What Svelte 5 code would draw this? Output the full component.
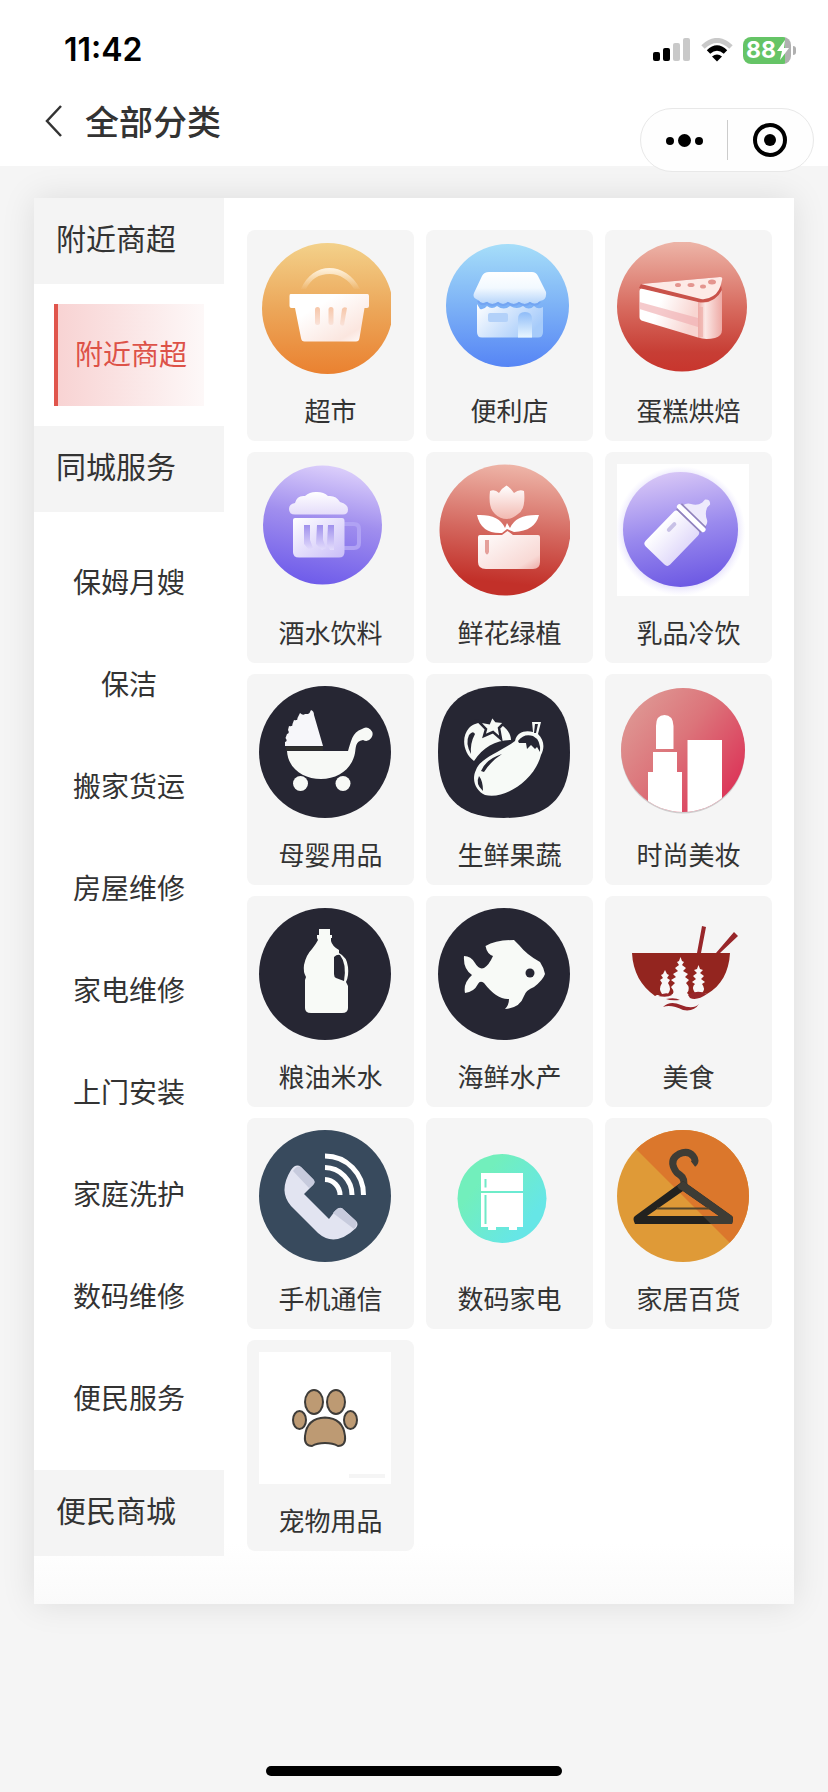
<script>
  const sections = [
    { title: '附近商超', items: ['附近商超'] },
    {
      title: '同城服务',
      items: ['保姆月嫂', '保洁', '搬家货运', '房屋维修', '家电维修', '上门安装', '家庭洗护', '数码维修', '便民服务']
    },
    { title: '便民商城', items: [] }
  ];
  let active = $state('附近商超');
</script>

{#snippet basket()}
  <defs>
    <linearGradient id="bk" x2="0" y2="1"><stop stop-color="#f3d18a" /><stop offset=".5" stop-color="#eca75a" /><stop offset="1" stop-color="#ea8130" /></linearGradient>
    <linearGradient id="bkh" x2="0" y2="1"><stop stop-color="#fff3e0" /><stop offset="1" stop-color="#fff3e0" stop-opacity=".05" /></linearGradient>
    <linearGradient id="bkb" x2="1" y2="1"><stop offset=".3" stop-color="#fff" /><stop offset=".8" stop-color="#fbe6df" /><stop offset="1" stop-color="#fff" /></linearGradient>
    <linearGradient id="bks" x2="0" y2="1"><stop stop-color="#f6c6a8" /><stop offset="1" stop-color="#fae3da" /></linearGradient>
  </defs>
  <circle cx="68.500" cy="66.500" r="65.500" fill="url(#bk)" />
  <path d="M42 47C48 33 59 26 70.500 26S94 33 101 47L95 47C90 38 81 32 70.500 32S52 37 47 47Z" fill="url(#bkh)" />
  <path d="M31.500 52H108.500Q110 52 110 54V64Q110 66 108 66H105.500L100.500 96Q100 99.500 97 99.500H45.500Q42.500 99.500 42 96L36 66H32.500Q30.500 66 30.500 64V54Q30.500 52 31.500 52Z" fill="url(#bkb)" />
  <g fill="url(#bks)"><rect x="56" y="65" width="5" height="18" rx="2.500" /><rect x="69.500" y="65" width="5" height="18" rx="2.500" /><path d="M83 67Q85 64 88 66L85 83Q83 85 81 82Z" /></g>
{/snippet}

{#snippet store()}
  <defs>
    <linearGradient id="st" x2="0" y2="1"><stop stop-color="#a6def9" /><stop offset=".5" stop-color="#7db2f6" /><stop offset="1" stop-color="#5685f5" /></linearGradient>
    <linearGradient id="sta" x2="0" y2="1"><stop stop-color="#fff" /><stop offset=".5" stop-color="#f2f9ff" /><stop offset="1" stop-color="#b5d4fa" /></linearGradient>
    <linearGradient id="stb" x2="1" y2=".5"><stop stop-color="#fff" /><stop offset="1" stop-color="#a6cbfa" /></linearGradient>
    <linearGradient id="std" x2="0" y2="1"><stop stop-color="#8fbcf8" /><stop offset="1" stop-color="#e8f6ff" /></linearGradient>
  </defs>
  <circle cx="69.500" cy="63.500" r="61.500" fill="url(#st)" />
  <path d="M39 62L42 67Q46 68 49 64Q54 68 59 64Q66 69 72 64Q79 68 85 64Q91 69 96 64Q100 68 105 65V90Q105 95.500 100 95.500H44Q39 95.500 39 90Z" fill="url(#stb)" />
  <path d="M51 30H94Q98 30 100 34L108 50Q109 58 102 59Q98 64 92 60Q87 64 81 60Q76 64 70 60Q65 64 60 60Q54 64 49 60Q43 63 40 58Q34 56 36 51L44 34Q46 30 51 30Z" fill="url(#sta)" />
  <path d="M40 59Q43 64 49 61Q54 65 60 61Q65 65 70 61Q76 65 81 61Q87 65 92 61Q98 65 102 60" fill="none" stroke="#74a5f2" stroke-width="2" />
  <rect x="50" y="71" width="20" height="9" rx="2" fill="#b3d1f9" />
  <path d="M80 95.500V77Q80 70 87 70T94 77V95.500Z" fill="url(#std)" />
{/snippet}

{#snippet cake()}
  <defs>
    <linearGradient id="ck" x2="0" y2="1"><stop stop-color="#edb5a8" /><stop offset=".5" stop-color="#d86c60" /><stop offset=".85" stop-color="#c73e35" /><stop offset="1" stop-color="#c8352d" /></linearGradient>
    <linearGradient id="ckf" x2="1" y2=".3"><stop offset=".4" stop-color="#fff" /><stop offset="1" stop-color="#f8d5d1" /></linearGradient>
    <linearGradient id="ckr" x2="1" y2="0"><stop stop-color="#eda9a4" /><stop offset=".3" stop-color="#fbe8e6" /><stop offset="1" stop-color="#eeaaa5" /></linearGradient>
  </defs>
  <circle cx="65" cy="64.500" r="65" fill="url(#ck)" />
  <path d="M22 46L24 42L103 35L105 50Q98 60 82 61Z" fill="#c9524a" />
  <path d="M24 42L103 35Q106 35 105 38Q103 50 96 54Q90 58 84 57Z" fill="#fdeae6" />
  <path d="M22.500 49Q22.500 46 26 47L81 60V95.500L26 79Q22.500 78 22.500 75Z" fill="url(#ckf)" />
  <path d="M22.500 60L81 76V85L22.500 67Z" fill="#f0aeb0" opacity=".65" />
  <path d="M81 60Q97 63 105 48V88Q105 94 98 96Q88 98 81 95.500Z" fill="url(#ckr)" />
  <path d="M84 65V95" stroke="#efb0ab" stroke-width="4" opacity=".7" />
  <g fill="#e4958f"><ellipse cx="61" cy="43" rx="3" ry="2" /><ellipse cx="74" cy="43" rx="3.500" ry="2" /><ellipse cx="86" cy="44.500" rx="3" ry="2" /><ellipse cx="95" cy="40" rx="4" ry="2.500" /></g>
{/snippet}

{#snippet beer()}
  <defs>
    <linearGradient id="br" x1=".6" x2=".4" y2="1"><stop stop-color="#dccffb" /><stop offset=".45" stop-color="#a08eee" /><stop offset="1" stop-color="#6e5bea" /></linearGradient>
    <linearGradient id="brf" x2="0" y2="1"><stop stop-color="#fff" /><stop offset="1" stop-color="#e4dcfa" /></linearGradient>
    <linearGradient id="brm" x2="1" y2="1"><stop stop-color="#fff" /><stop offset="1" stop-color="#c9bdf8" /></linearGradient>
    <linearGradient id="brs" x2="0" y2="1"><stop stop-color="#9f90ec" /><stop offset="1" stop-color="#e3dcfc" /></linearGradient>
  </defs>
  <circle cx="63.500" cy="61" r="59.500" fill="url(#br)" />
  <path d="M85 60H95Q100 60 100 65V79Q100 84 95 84H85" fill="none" stroke="#b0a2f4" stroke-width="4" />
  <path d="M34 56Q34 54 36 54H83Q85.500 54 85.500 57V88Q85.500 93.500 80 93.500H40Q34 93.500 34 88Z" fill="url(#brm)" />
  <path d="M36 50.500Q30 50.500 30 45Q30 40 36 39Q38 31 46 32Q51 27.500 58 28Q65 28 69 32Q77 31 81 38Q89 40 89 45.500Q89 50.500 84 50.500Z" fill="url(#brf)" />
  <g fill="url(#brs)"><path d="M45 61H51V76L54 84L50 86L45 80Z" /><path d="M58 61H64V76L67 84L63 86L57 80Z" /><path d="M69 61H75V86H71L68 80Z" /></g>
{/snippet}

{#snippet flower()}
  <defs>
    <linearGradient id="fl" x1=".55" x2=".45" y2="1"><stop stop-color="#eeb5a8" /><stop offset=".5" stop-color="#d4685f" /><stop offset=".9" stop-color="#c23029" /></linearGradient>
    <linearGradient id="flt" x2="0" y2="1"><stop stop-color="#fff" /><stop offset="1" stop-color="#f2b9b1" /></linearGradient>
    <linearGradient id="flp" x2="1" y2="1"><stop stop-color="#fff" /><stop offset=".8" stop-color="#f8d9d5" /><stop offset="1" stop-color="#edaaa5" /></linearGradient>
  </defs>
  <circle cx="67" cy="66" r="65.500" fill="url(#fl)" />
  <path d="M52 27Q57 25 61 29Q64 24 68.500 21.500Q73 24 76 29Q81 25 86 27Q88 45 80 50Q74 55 69 55Q62 55 57 50Q50 44 52 27Z" fill="url(#flt)" />
  <path d="M39 51Q61 50 67 64L69 59L72 64Q78 50 101 51Q97 67 76 68L69 65L64 69Q43 70 39 51Z" fill="#fff" />
  <path d="M40 73Q40 71 42 71H64L69.500 67L75 71H100Q102 71 102 73V98Q102 105 95 105H48Q40 105 40 98Z" fill="url(#flp)" />
  <path d="M47 76H51V88Q49 93 47 88Z" fill="#e5a09a" />
{/snippet}

{#snippet bottle()}
  <defs>
    <linearGradient id="bt" x1=".4" x2=".6" y2="1"><stop stop-color="#d7c6f6" /><stop offset=".5" stop-color="#9a8aee" /><stop offset="1" stop-color="#6c58e3" /></linearGradient>
    <linearGradient id="btb" x2="1" y2="0"><stop stop-color="#fff" /><stop offset="1" stop-color="#e1dafa" /></linearGradient>
    <radialGradient id="btg"><stop offset=".85" stop-color="#b4a8f5" stop-opacity=".35" /><stop offset="1" stop-color="#d3ccfb" stop-opacity="0" /></radialGradient>
  </defs>
  <path d="M0 0H132V132H0Z" fill="#fff" />
  <circle cx="63.500" cy="67" r="65" fill="url(#btg)" />
  <circle cx="63.500" cy="65.500" r="57.500" fill="url(#bt)" />
  <g transform="rotate(44 63.500 66)">
    <rect x="46" y="54" width="34" height="48" rx="4" fill="url(#btb)" />
    <path d="M48 47Q49 42 53 40Q59 37 60 31V27Q63.500 23 67 27V31Q69 37 75 40Q79 42 79 47Z" fill="#eeeafc" />
    <rect x="44" y="47.500" width="38" height="5" rx="2.500" fill="#fff" />
    <path d="M46 46.500H80M46 53.500H80" stroke="#9184b8" stroke-width="1.500" />
    <rect x="53" y="64" width="4" height="12" rx="2" fill="#c8c1e6" />
  </g>
{/snippet}

{#snippet stroller()}
  <circle cx="66" cy="66" r="66" fill="#262633" />
  <path d="M52 24Q55 25 55 29L64 60H26V56Q29 55 26.500 52L28 48Q31 47 29 44L30 40Q34 41 33.500 38L35 34Q39 35 38.500 32L41 27Q44 30 46 28L49 28Q51 27 52 24Z" fill="#f7f7fa" />
  <path d="M28 65H89C92 56 93 46 103 43A6.500 6.500 0 1 1 104 54C96 55 97 62 96 67C93 83 79 93 62 93S29 83 28 65Z" fill="#f7f9f6" />
  <path d="M27 62.500H64" stroke="#30302e" stroke-width="4" />
  <circle cx="41.500" cy="97.500" r="7.500" fill="#f7f9f6" /><circle cx="84" cy="97.500" r="7.500" fill="#f7f9f6" />
{/snippet}

{#snippet produce()}
  <path d="M66 0C111 0 132 21 132 66S111 132 66 132S0 111 0 66S21 0 66 0Z" fill="#262633" />
  <path d="M36 75C25 67 23 51 31 42C37 35 50 36 60 37C67 40 73 47 73 54C58 54 45 61 36 75Z" fill="#f7faf7" />
  <path d="M33 68Q27 57 31 49Q35 44 37 48Q32 57 33 68Z" fill="#262633" />
  <path d="M40 35L51 37L54 30L58 35L67 36L61 42L63 53L55 46L46 50L48 43Z" fill="#f7faf7" stroke="#262633" stroke-width="2.500" />
  <path d="M47 109C38 105 33 94 38 84C42 72 62 66 77 55C79 46 87 44 95 46L94 36L103 36L100 48C106 54 107 61 103 69C97 93 68 114 47 109Z" fill="#f7faf7" />
  <path d="M97 38H100L98 47H96Z" fill="#262633" />
  <path d="M80 55Q86 47 95 50Q103 54 102 66L99 61L97 63L93 59L89 63L88 57L81 57Z" fill="#262633" />
  <path d="M43 85Q48 73 64 68Q53 75 46 86Z" fill="#262633" />
  <path d="M41 90Q37 98 45 105Q45 95 41 90Z" fill="#262633" />
{/snippet}

{#snippet lipstick()}
  <defs>
    <linearGradient id="lp" x2="1" y2=".8"><stop stop-color="#dfa29b" /><stop offset=".5" stop-color="#dc747a" /><stop offset="1" stop-color="#dc2f55" /></linearGradient>
    <clipPath id="lpc"><circle cx="66" cy="64" r="62" /></clipPath>
  </defs>
  <circle cx="66" cy="65.500" r="62" fill="#cfcccd" />
  <circle cx="66" cy="64" r="62" fill="url(#lp)" />
  <g clip-path="url(#lpc)" fill="#fff">
    <path d="M39 63V40Q39 29 47.500 29T56.500 40V63ZM36 66H60V86H65V130H31V86H36ZM70.500 54H105V130H70.500Z" />
  </g>
{/snippet}

{#snippet jug()}
  <circle cx="66" cy="66" r="66" fill="#262633" />
  <path d="M60 21H71V27H73V30H72V33Q73 38 80 42V45Q88 49 89 59Q90 68 87 74L89 78V100Q89 105 83 105H52Q46 105 46 100V72L47 69Q44 64 45 57Q47 47 53 41Q57 36 59 32L58 30V27H60Z" fill="#f8faf7" />
  <path d="M75 49Q78 46 81 47Q88 56 85 73L77 70Q75 69 75 66Z" fill="#262633" />
{/snippet}

{#snippet fish()}
  <circle cx="66" cy="66" r="66" fill="#262633" />
  <path d="M47.500 38Q58 32 76 32L81 37Q89 47 102 54Q106 60 107 66Q105 72 96 79Q88 82 86 88Q82 100 67 101Q71 97 71 91Q59 92 46 75Q42 72 40 76Q36 84 27 85Q25 75 34 67Q25 61 26 48Q33 48 37 55Q41 62 46 60Q51 57 55 48Q49 46 47.500 38Z" fill="#f8faf7" />
  <circle cx="92" cy="65" r="4.500" fill="#262633" />
{/snippet}

{#snippet bowl()}
  <path d="M85 18L89 19L84 45H80ZM117 24L121 28L103 45H99Z" fill="#98262a" />
  <path d="M15 45H113C112 64 104 78 90 86Q82 82 73 88L38 88C24 78 16 64 15 45Z" fill="#93251f" />
  <path d="M63.500 49L65 53L67 54L65 57L69 60L66 63L71 66L68 69L72 72L69 75Q74 80 70 85L73 88L71 92H58L44 90L38 87L54 87Q59 85 54 79L58 75L54 72L59 69L56 66L61 63L58 60L62 57L60 54L62 53Z" fill="#f8f8f8" />
  <path d="M48 62L50 66L52 67L50 70L53 72L51 75Q55 81 51 86H45Q41 81 45 75L43 72L46 70L44 67L46 66ZM81.500 57L83 61L86 62L83 65L87 68L84 71L88 74L85 76Q89 81 85 85H78Q74 79 78 76L75 74L79 71L76 68L80 65L77 62L80 61Z" fill="#f8f8f8" />
  <path d="M41 88Q49 83 55 87Q50 90 41 88ZM71 87Q80 81 90 86Q80 93 73 90ZM49 91Q58 89 63 92Q54 93 49 91ZM46 99Q53 92 64 97Q76 102 82 96Q77 104 66 102Q54 96 46 99Z" fill="#98262a" />
{/snippet}

{#snippet phone()}
  <circle cx="66" cy="66" r="66" fill="#384a5d" />
  <path d="M32 40Q37 33 42 37L54 49Q57 52 54 55L45 64L70 89L76 81Q81 75 85 80L97 91Q100 94 97 98Q76 118 59 103L32 76Q19 61 32 40Z" fill="#e2e4f1" />
  <path d="M34 41Q39 34 43 38L54 49Q57 52 54 55L50 58ZM74 83Q81 75 85 80L97 91Q99 94 95 99Z" fill="#c7cbdd" />
  <path d="M66 49.500A15.500 15.500 0 0 1 81 65M66 37.500A27.500 27.500 0 0 1 93 65M66 26A38.500 38.500 0 0 1 104.500 65" fill="none" stroke="#fff" stroke-width="5" />
{/snippet}

{#snippet fridge()}
  <defs><linearGradient id="fr" x2="1" y2=".8"><stop offset=".3" stop-color="#72efbc" /><stop offset=".85" stop-color="#66e6e6" /></linearGradient></defs>
  <circle cx="64" cy="68.500" r="44.500" fill="url(#fr)" />
  <path d="M43 43H85V61H43ZM43 63H85V97H79V100H71V97H58V100H50V97H43Z" fill="#fff" />
  <path d="M47.500 49V57.500M47.500 65V94" stroke="#70eac8" stroke-width="2" />
{/snippet}

{#snippet hanger()}
  <defs><clipPath id="hgc"><path d="M0 0H132V132Z" /></clipPath></defs>
  <circle cx="66" cy="66" r="66" fill="#df9a37" />
  <circle cx="66" cy="66" r="66" fill="#db772c" clip-path="url(#hgc)" />
  <path d="M76 34Q80 31 76 26Q71 20 62 24Q53 29 57 38Q59 43 63 45Q69 49 66 59" fill="none" stroke="#3e3c35" stroke-width="7" />
  <path d="M66 51L115 86Q117 88 115 94H18Q15 88 18 86ZM66 61L30 86H102Z" fill="#22221f" fill-rule="evenodd" />
  <path d="M66 51L115 86Q117 88 115 94H94L86 86H102L66 61L62 59L60 56Z" fill="#3e3c35" />
  <path d="M40 78.500H92" stroke="#54462c" stroke-width="2" />
{/snippet}

{#snippet paw()}
  <path d="M0 0H132V132H0Z" fill="#fff" />
  <g fill="#bd9a73" stroke="#3e3c39" stroke-width="2">
    <ellipse cx="55" cy="50" rx="9" ry="12" /><ellipse cx="77" cy="50" rx="9" ry="12" />
    <ellipse cx="40.500" cy="68" rx="6.500" ry="9" /><ellipse cx="91.500" cy="68" rx="6.500" ry="9" />
    <path d="M46 84Q48 66 66 65.500Q84 66 86 84Q87 94 79 94Q74 91 66 91T53 94Q45 94 46 84Z" />
  </g>
  <path d="M90 124H126" stroke="#f5f5f5" stroke-width="4" />
{/snippet}

<div class="page">
  <header>
    <div class="status">
      <time>11:42</time>
      <div class="indicators">
        <svg width="38" height="24" viewBox="0 0 38 24" aria-hidden="true">
          <rect y="14" width="7" height="9" rx="2" /><rect x="10" y="10" width="7" height="13" rx="2" />
          <rect x="20" y="5" width="7" height="18" rx="2" fill="#c9c9c9" /><rect x="30" width="7" height="23" rx="2" fill="#c9c9c9" />
        </svg>
        <svg width="32" height="24" viewBox="0 0 32 24" aria-hidden="true">
          <path d="M2 9Q16-4 30 9" fill="none" stroke="#c9c9c9" stroke-width="5" />
          <path d="M7.500 14Q16 6 24.500 14" fill="none" stroke="#000" stroke-width="5" />
          <path d="M11 18.500Q16 14.500 21 18.500L16 23.500Z" />
        </svg>
        <div class="battery">
          <span>88</span>
          <svg width="14" height="20" viewBox="0 0 14 20" aria-hidden="true"><path d="M9 0L1 11H6L4 20L13 8H8Z" fill="#fff" /></svg>
        </div>
      </div>
    </div>
    <div class="bar">
      <button class="back" aria-label="返回">
        <svg width="18" height="32" viewBox="0 0 18 32"><path d="M16 1L2 16L16 31" fill="none" stroke="#333" stroke-width="2.500" /></svg>
      </button>
      <h1>全部分类</h1>
      <div class="capsule">
        <button aria-label="更多">
          <svg width="40" height="40" viewBox="0 0 40 40"><circle cx="6" cy="21" r="4" /><circle cx="20.500" cy="20.500" r="6.500" /><circle cx="35" cy="21" r="4" /></svg>
        </button>
        <button aria-label="关闭">
          <svg width="40" height="40" viewBox="0 0 40 40"><circle cx="20" cy="20" r="15" fill="none" stroke="#000" stroke-width="4" /><circle cx="20" cy="20" r="6" /></svg>
        </button>
      </div>
    </div>
  </header>

  <main>
    <nav>
      {#each sections as section}
        <h2>{section.title}</h2>
        {#if section.items.length}
          <ul>
            {#each section.items as item}
              <li><button class:active={active === item} onclick={() => (active = item)}>{item}</button></li>
            {/each}
          </ul>
        {/if}
      {/each}
    </nav>
    <div class="grid">
      {#each [{ name: '超市', art: basket }, { name: '便利店', art: store }, { name: '蛋糕烘焙', art: cake }, { name: '酒水饮料', art: beer }, { name: '鲜花绿植', art: flower }, { name: '乳品冷饮', art: bottle }, { name: '母婴用品', art: stroller }, { name: '生鲜果蔬', art: produce }, { name: '时尚美妆', art: lipstick }, { name: '粮油米水', art: jug }, { name: '海鲜水产', art: fish }, { name: '美食', art: bowl }, { name: '手机通信', art: phone }, { name: '数码家电', art: fridge }, { name: '家居百货', art: hanger }, { name: '宠物用品', art: paw }] as tile}
        <a class="tile" href="#{tile.name}">
          <svg width="132" height="132" viewBox="0 0 132 132" aria-hidden="true">{@render tile.art()}</svg>
          <span>{tile.name}</span>
        </a>
      {/each}
    </div>
  </main>
  <div class="home"></div>
</div>

<style>
  :global(body) {
    margin: 0;
    background: #f5f5f5;
  }
  .page {
    display: flex;
    flex-direction: column;
    min-height: 100vh;
    box-sizing: border-box;
    padding-bottom: 16px;
    background: #f5f5f5;
    color: #333;
    font-family: 'Noto Sans CJK SC', sans-serif;
  }
  button {
    border: 0;
    padding: 0;
    background: none;
    color: inherit;
    font: inherit;
    cursor: pointer;
  }
  svg {
    display: block;
  }
  header {
    height: 166px;
    background: #fff;
  }
  .status {
    display: flex;
    align-items: center;
    justify-content: space-between;
    height: 100px;
    padding: 0 32px 0 64px;
    color: #000;
  }
  time {
    font: 600 32px/40px Inter, sans-serif;
  }
  .indicators {
    display: flex;
    align-items: center;
    gap: 10px;
  }
  .battery {
    position: relative;
    display: flex;
    align-items: center;
    width: 48px;
    height: 27px;
    box-sizing: border-box;
    margin-right: 5px;
    padding-left: 3px;
    border-radius: 8px;
    background: linear-gradient(90deg, #65c466 88%, #b0b0b0 88%);
    color: #fff;
    font: 700 23px/27px Inter, sans-serif;
  }
  .battery::after {
    content: '';
    position: absolute;
    right: -5px;
    top: 9px;
    width: 3px;
    height: 9px;
    border-radius: 0 4px 4px 0;
    background: #b0b0b0;
  }
  .bar {
    display: flex;
    align-items: center;
    height: 42px;
    padding: 0 14px 0 45px;
  }
  h1 {
    flex: 1;
    margin: 0 0 0 22px;
    font-size: 34px;
    line-height: 44px;
    font-weight: 500;
  }
  .capsule {
    display: flex;
    align-items: center;
    align-self: flex-start;
    width: 174px;
    height: 64px;
    margin-top: 8px;
    box-sizing: border-box;
    border: 1px solid #e8e8e8;
    border-radius: 32px;
    background: #fefefe;
    z-index: 1;
  }
  .capsule button {
    display: flex;
    flex: 1;
    justify-content: center;
  }
  .capsule button + button {
    border-left: 1px solid #ccc;
  }
  main {
    display: flex;
    margin: 32px 34px 0;
    padding-bottom: 48px;
    background: linear-gradient(0deg, #fafafa, #fff 60px);
    box-shadow: 0 0 32px rgba(0, 0, 0, 0.1);
  }
  nav {
    width: 190px;
  }
  h2 {
    margin: 0;
    padding: 17px 22px 25px;
    background: #f4f4f4;
    font-size: 30px;
    line-height: 44px;
    font-weight: 400;
  }
  ul {
    margin: 0;
    padding: 20px;
    list-style: none;
  }
  li button {
    width: 100%;
    height: 102px;
    padding-bottom: 4px;
    font-size: 28px;
  }
  li button.active {
    border-left: 4px solid #e0554c;
    background: linear-gradient(90deg, #f8d3d3, #fdf8f8);
    color: #dd5248;
  }
  .grid {
    display: grid;
    flex: 1;
    grid-template-columns: repeat(3, 1fr);
    align-content: start;
    gap: 11px 12px;
    padding: 32px 22px 0 23px;
  }
  .tile {
    padding: 12px;
    border-radius: 8px;
    background: #f5f5f5;
    color: inherit;
    text-decoration: none;
  }
  .tile span {
    display: block;
    margin-top: 17px;
    font-size: 26px;
    line-height: 38px;
    text-align: center;
  }
  .home {
    width: 296px;
    height: 10px;
    margin: auto auto 0;
    border-radius: 5px;
    background: #000;
  }
</style>
